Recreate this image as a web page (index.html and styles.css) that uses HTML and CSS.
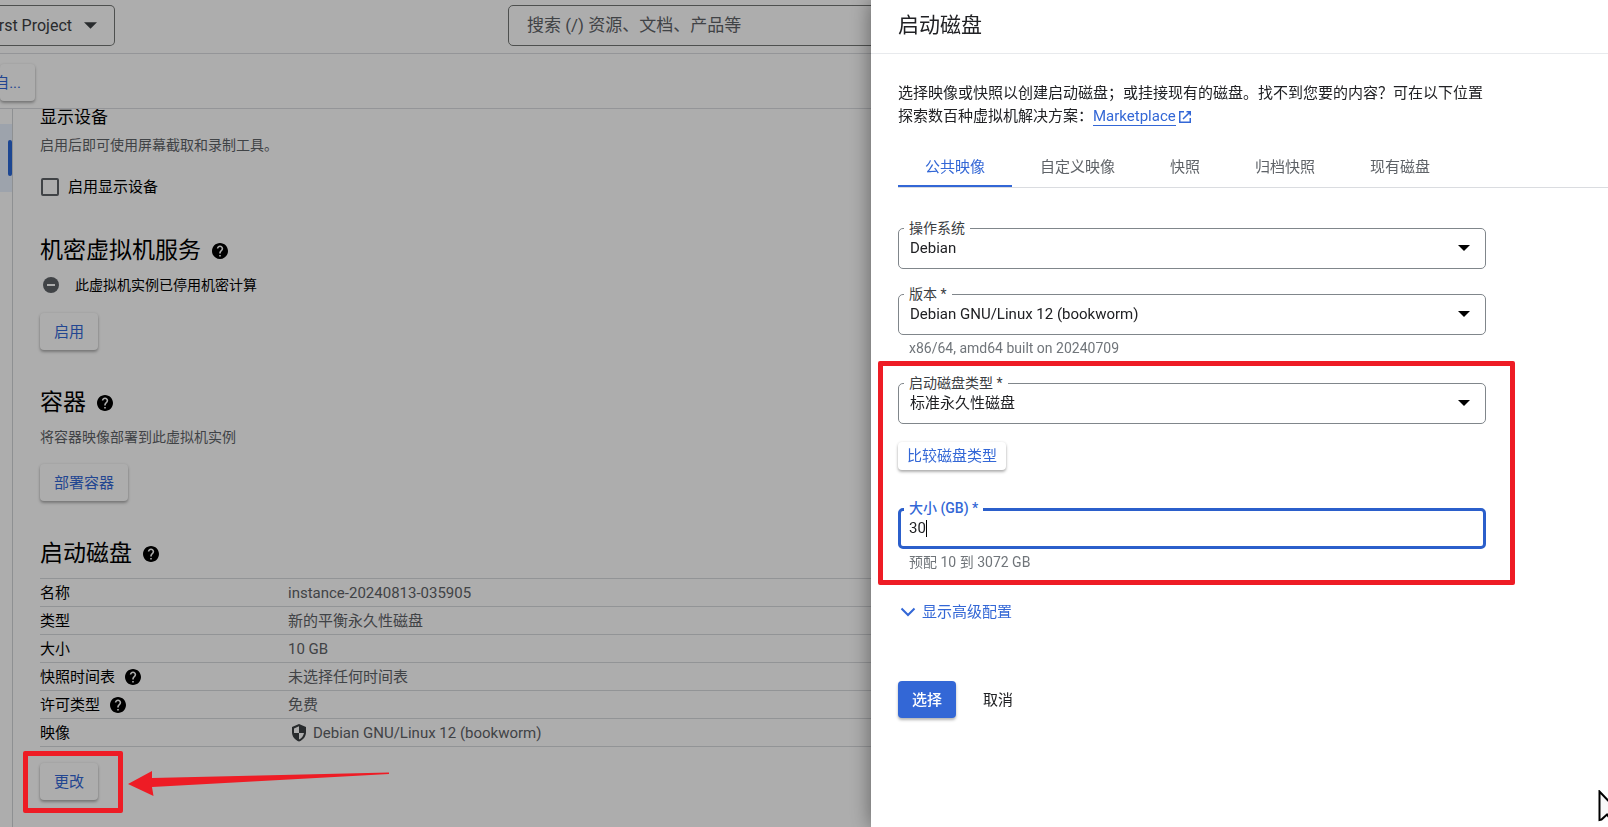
FILE: index.html
```html
<!DOCTYPE html>
<html lang="zh-CN">
<head>
<meta charset="utf-8">
<title>启动磁盘</title>
<link rel="stylesheet" href="styles.css">
</head>
<body>
<svg class="sprite" aria-hidden="true">
  <symbol id="help" viewBox="2 2 20 20"><path d="M12 2C6.48 2 2 6.48 2 12s4.48 10 10 10 10-4.48 10-10S17.52 2 12 2zm1 17h-2v-2h2v2zm2.07-7.75l-.9.92C13.45 12.9 13 13.5 13 15h-2v-.5c0-1.1.45-2.1 1.17-2.83l1.24-1.26c.37-.36.59-.86.59-1.41 0-1.1-.9-2-2-2s-2 .9-2 2H8c0-2.21 1.79-4 4-4s4 1.79 4 4c0 .88-.36 1.68-.93 2.25z"/></symbol>
  <symbol id="caret" viewBox="0 0 12 6"><path d="M0 0h12L6 6z"/></symbol>
</svg>

<div class="app">
  <header class="topbar">
    <button class="project" type="button">My First Project<svg class="project-caret"><use href="#caret"/></svg></button>
    <input class="search" type="search" placeholder="搜索 (/) 资源、文档、产品等" aria-label="搜索">
  </header>
  <div class="toolbar"><button class="raised toolbar-button" type="button">自...</button></div>
  <div class="workspace">
    <nav class="rail" aria-label="导航"><span class="rail-item"></span></nav>
    <main class="content">
      <h3 class="subtitle">显示设备</h3>
      <p class="hint">启用后即可使用屏幕截取和录制工具。</p>
      <label class="check"><input type="checkbox">启用显示设备</label>

      <h2 class="title">机密虚拟机服务<svg class="help"><use href="#help"/></svg></h2>
      <p class="status"><svg class="minus" viewBox="0 0 16 16"><circle cx="8" cy="8" r="8"/><path d="M4 7h8v2H4z" fill="#fff"/></svg>此虚拟机实例已停用机密计算</p>
      <button class="raised enable" type="button">启用</button>

      <h2 class="title">容器<svg class="help"><use href="#help"/></svg></h2>
      <p class="hint deploy-hint">将容器映像部署到此虚拟机实例</p>
      <button class="raised deploy" type="button">部署容器</button>

      <h2 class="title">启动磁盘<svg class="help"><use href="#help"/></svg></h2>
      <table class="facts">
        <tr><th scope="row">名称</th><td>instance-20240813-035905</td></tr>
        <tr><th scope="row">类型</th><td>新的平衡永久性磁盘</td></tr>
        <tr><th scope="row">大小</th><td>10 GB</td></tr>
        <tr><th scope="row"><span class="with-icon">快照时间表<svg class="help"><use href="#help"/></svg></span></th><td>未选择任何时间表</td></tr>
        <tr><th scope="row"><span class="with-icon">许可类型<svg class="help"><use href="#help"/></svg></span></th><td>免费</td></tr>
        <tr><th scope="row">映像</th><td><span class="with-icon image-name"><svg class="shield" viewBox="0 0 16 18"><path d="M8 0L1 3v5c0 4.500 3 8.200 7 9.500 4-1.300 7-5 7-9.500V3z"/><path fill="#fff" d="M8 2.300V9h5c-.5 2.900-2.400 5.400-5 6.500V9H3V4.400z"/></svg>Debian GNU/Linux 12 (bookworm)</span></td></tr>
      </table>
      <div class="change"><button class="raised" type="button">更改</button></div>
    </main>
  </div>
</div>

<div class="scrim"></div>
<div class="mark mark-change">
  <svg class="arrow" viewBox="0 0 262 26"><path d="M0 13L24 0v7L261 1.500v1.500L24 16l1.500 9z"/></svg>
</div>

<aside class="drawer" aria-label="启动磁盘">
  <header class="drawer-head"><h2>启动磁盘</h2></header>
  <div class="drawer-body">
    <p class="intro">选择映像或快照以创建启动磁盘；或挂接现有的磁盘。找不到您要的内容？可在以下位置探索数百种虚拟机解决方案：<a href="#"><span>Marketplace</span><svg class="external" viewBox="0 0 12 12"><path d="M5 .75H.75v10.500h10.500V7M7.500.75h3.750V4.500M11 1L4 8"/></svg></a></p>
    <div class="tabs" role="tablist">
      <button class="tab active" type="button" role="tab" aria-selected="true">公共映像</button>
      <button class="tab" type="button" role="tab">自定义映像</button>
      <button class="tab" type="button" role="tab">快照</button>
      <button class="tab" type="button" role="tab">归档快照</button>
      <button class="tab" type="button" role="tab">现有磁盘</button>
    </div>
    <form class="form">
      <div class="field">
        <label for="os">操作系统</label>
        <select id="os"><option>Debian</option></select>
        <svg class="caret"><use href="#caret"/></svg>
      </div>
      <div class="field">
        <label for="version">版本 *</label>
        <select id="version"><option>Debian GNU/Linux 12 (bookworm)</option></select>
        <svg class="caret"><use href="#caret"/></svg>
      </div>
      <p class="helper">x86/64, amd64 built on 20240709</p>
      <div class="disk-group">
        <div class="field">
          <label for="type">启动磁盘类型 *</label>
          <select id="type"><option>标准永久性磁盘</option></select>
          <svg class="caret"><use href="#caret"/></svg>
        </div>
        <button class="raised compare" type="button">比较磁盘类型</button>
        <div class="field focused">
          <label for="size">大小 (GB) *</label>
          <input id="size" type="text" value="30">
          <span class="text-cursor"></span>
        </div>
        <p class="helper">预配 10 到 3072 GB</p>
        <div class="mark mark-disk"></div>
      </div>
      <button class="advanced" type="button"><svg viewBox="0 0 16 10"><path d="M1.500 1.500L8 8l6.500-6.500"/></svg>显示高级配置</button>
      <div class="actions">
        <button class="primary" type="button">选择</button>
        <button class="plain" type="button">取消</button>
      </div>
    </form>
  </div>
</aside>
<svg class="pointer" viewBox="0 0 22 32"><path d="M1.500 1.500v28.500l2-.5 5.500-5 4.500 6.500 4-2-4-7h7.500z"/></svg>
</body>
</html>
```

FILE: styles.css
```css
* { box-sizing: border-box; }
body {
  margin: 0;
  height: 100vh;
  overflow: hidden;
  background: #fff;
  color: #202124;
  font: 15px/20px Roboto, "Noto Sans CJK SC", sans-serif;
}
h2, h3, p { margin: 0; font-weight: 400; }
button, input, select { font: inherit; color: inherit; }
button { border: 0; background: none; padding: 0; white-space: nowrap; }
svg { display: block; flex: none; fill: currentColor; }
.sprite { position: absolute; width: 0; height: 0; }

.app { display: flex; flex-direction: column; height: 100vh; color: #000; }
.topbar {
  flex: none;
  display: flex;
  align-items: center;
  justify-content: space-between;
  height: 54px;
  padding-bottom: 3px;
  border-bottom: 1px solid #dadce0;
}
.project {
  display: flex;
  align-items: center;
  justify-content: flex-end;
  gap: 12px;
  width: 115px;
  height: 41px;
  padding: 1px 17px 0 0;
  border: 1px solid #747775;
  border-left: 0;
  border-radius: 0 5px 5px 0;
  font-size: 16px;
  color: #3c4043;
}
.project-caret { width: 13px; height: 7px; }
.search {
  flex: none;
  width: calc(100% - 508px);
  height: 41px;
  padding: 0 18px;
  border: 1px solid #747775;
  border-radius: 5px;
  background: none;
  font-size: 17px;
}
.search::placeholder { color: #5f6368; opacity: 1; }
.toolbar {
  flex: none;
  height: 55px;
  padding-top: 10px;
  border-bottom: 1px solid #dadce0;
}
.raised {
  height: 37px;
  padding: 0 14px;
  border-radius: 4px;
  background: #fff;
  color: #3367d6;
  box-shadow: 0 2px 3px rgba(0, 0, 0, .3), 0 0 3px rgba(0, 0, 0, .08);
}
.toolbar-button { width: 35px; padding: 0 14px 0 0; display: flex; align-items: center; justify-content: flex-end; }
.workspace { flex: 1; min-height: 0; display: flex; overflow: hidden; }
.rail { flex: none; width: 13px; padding-top: 15px; border-right: 1px solid #d2d4d7; }
.rail-item { display: flex; align-items: center; justify-content: flex-end; height: 68px; background: #e8f0fe; }
.rail-item::after { content: ""; width: 4px; height: 36px; border-radius: 2px; background: #2a68d8; }
.content { flex: 1; min-width: 0; padding-left: 27px; }
.subtitle { margin-top: -4px; font-size: 17px; line-height: 24px; }
.hint { margin-top: 6px; font-size: 14px; color: #5f6368; }
.check { display: flex; align-items: center; gap: 9px; margin-top: 22px; }
.check input {
  appearance: none;
  width: 18px;
  height: 18px;
  margin: 0 0 0 1px;
  border: 2px solid #5f6368;
  border-radius: 2px;
}
.title { display: flex; align-items: center; gap: 11px; font-size: 23px; line-height: 32px; }
.help { width: 16px; height: 16px; }
.check + .title { margin-top: 38px; }
.status { display: flex; align-items: center; gap: 16px; margin-top: 8px; padding-left: 3px; font-size: 14px; }
.minus { width: 16px; height: 16px; color: #5f6368; }
.enable { display: block; margin: 18px 0 37px; }
.deploy-hint { margin-top: 8px; }
.deploy { display: block; margin: 17px 0 37px; }
.facts { width: 100%; margin-top: 8px; border-collapse: collapse; border-top: 1px solid #d8dadd; }
.facts th, .facts td { height: 28px; padding: 0; border-bottom: 1px solid #d8dadd; text-align: left; font-weight: 400; }
.facts th { width: 248px; }
.facts td { color: #5f6368; }
.with-icon { display: flex; align-items: center; gap: 10px; }
.image-name { gap: 6px; padding-left: 3px; }
.shield { width: 16px; height: 18px; color: #3c4043; }
.change { margin-top: 16px; }

.scrim { position: fixed; inset: 0; background: rgba(0, 0, 0, .32); }
.mark { position: absolute; border: 5px solid #ee1c25; border-radius: 2px; pointer-events: none; }
.mark-change { left: 23px; top: 751px; width: 100px; height: 62px; }
.arrow { position: absolute; left: 100px; top: 15px; width: 262px; height: 26px; color: #ee1c25; }

.drawer {
  position: fixed;
  top: 0;
  right: 0;
  bottom: 0;
  width: 737px;
  max-width: 100%;
  background: #fff;
  box-shadow: 0 0 20px rgba(0, 0, 0, .45);
}
.drawer-head { display: flex; align-items: center; height: 54px; padding: 0 27px 3px; border-bottom: 1px solid #e8eaed; }
.drawer-head h2 { font-size: 21px; line-height: 28px; }
.drawer-body { padding: 28px 0 0 27px; }
.intro { max-width: 588px; line-height: 23px; }
.intro a { display: inline-flex; align-items: center; gap: 3px; color: #3367d6; text-decoration: none; }
.intro a span { line-height: 18px; border-bottom: 1px solid #3367d6; }
.external { width: 12px; height: 12px; fill: none; stroke: currentColor; stroke-width: 1.5; }
.tabs { display: flex; gap: 1px; margin-top: 19px; border-bottom: 1px solid #dadce0; }
.tab { height: 40px; padding: 0 27px; color: #5f6368; }
.tab.active { color: #3367d6; box-shadow: inset 0 -2px #3367d6; }
.form { padding-top: 40px; max-width: 588px; }
.field { position: relative; height: 41px; }
.field + .field { margin-top: 25px; }
.field label {
  position: absolute;
  left: 6px;
  top: -10px;
  padding: 0 5px;
  background: #fff;
  font-size: 14px;
  line-height: 20px;
  color: #3c4043;
}
.field select, .field input {
  appearance: none;
  display: block;
  width: 100%;
  height: 100%;
  padding: 0 11px 1px;
  border: 1px solid #80868b;
  border-radius: 5px;
  background: #fff;
  outline: 0;
}
.field .caret { position: absolute; right: 16px; top: 17px; width: 12px; height: 6px; color: #000; pointer-events: none; }
.field.focused label { color: #3367d6; font-weight: 500; }
.field.focused input { padding: 0 8px 1px; border: 3px solid #2b5fcb; }
.text-cursor { position: absolute; left: 28px; top: 12px; width: 1px; height: 17px; background: #000; }
.helper { margin-top: 3px; padding-left: 11px; font-size: 14px; line-height: 20px; color: #70757a; }
.disk-group { position: relative; margin-top: 25px; }
.mark-disk { left: -20px; right: -29px; top: -22px; bottom: -13px; }
.compare { display: block; height: 28px; margin: 18px 0 38px; padding: 0 9px; }
.advanced { display: flex; align-items: center; gap: 6px; margin-top: 30px; padding-left: 2px; color: #3367d6; }
.advanced svg { width: 16px; height: 10px; fill: none; stroke: currentColor; stroke-width: 2; }
.actions { display: flex; gap: 13px; margin-top: 59px; }
.primary {
  height: 37px;
  padding: 0 14px;
  border-radius: 4px;
  background: #3367d6;
  color: #fff;
  font-weight: 500;
  box-shadow: 0 2px 3px rgba(0, 0, 0, .3);
}
.plain { padding: 0 14px; }
.pointer { position: fixed; right: -12px; bottom: 5px; width: 22px; height: 32px; fill: #f8f8f8; stroke: #000; stroke-width: 2; }
```
